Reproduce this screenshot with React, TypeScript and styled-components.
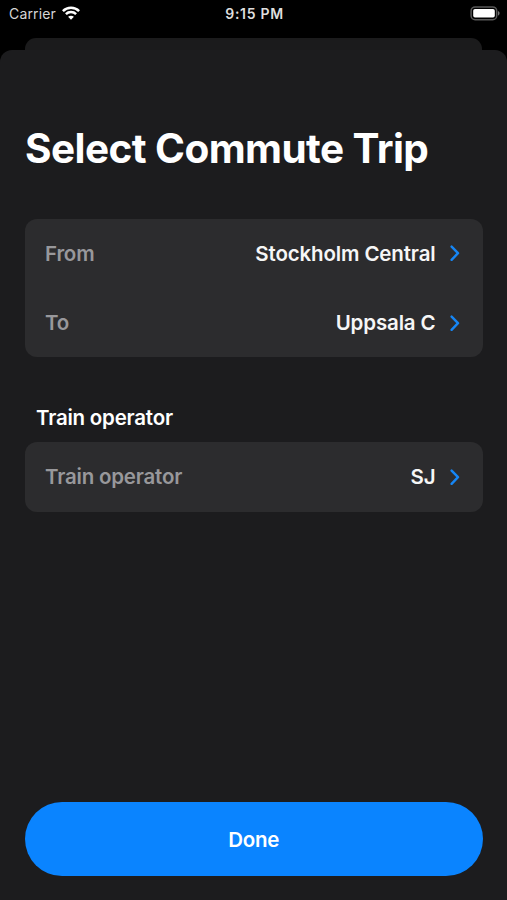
import React from "react";
import styled, { createGlobalStyle } from "styled-components";

const GlobalStyle = createGlobalStyle`
  *, *::before, *::after { box-sizing: border-box; }
  html, body { margin: 0; background: #000; }
  body { font-family: Inter, "Liberation Sans", sans-serif; color: #fff; overflow: hidden; }
  button { font: inherit; color: inherit; border: 0; background: none; padding: 0; }
`;

const Screen = styled.main`
  display: flex;
  flex-direction: column;
  width: 507px;
  height: 900px;
  background: #000;
`;

const StatusBar = styled.header`
  display: grid;
  grid-template-columns: 1fr auto 1fr;
  align-items: center;
  height: 28px;
  flex: none;
  padding: 0 7px 0 9px;
  font-size: 14px;
  line-height: 28px;
`;

const Carrier = styled.span`
  display: flex;
  align-items: center;
  gap: 6px;
  color: #d6d6d6;
  letter-spacing: 0.15px;
`;

const WifiSlot = styled.span`
  display: flex;
  margin-top: -2px;
`;

const Clock = styled.time`
  font-weight: 600;
  font-size: 14px;
  letter-spacing: 0.7px;
  color: #dedede;
`;

const Battery = styled.span`
  display: flex;
  justify-content: flex-end;
  margin-top: -1px;
`;

const PreviousSheet = styled.div`
  flex: none;
  height: 12px;
  margin: 10px 25px 0;
  border-radius: 11px 11px 0 0;
  background: #1b1b1c;
`;

const Sheet = styled.section`
  display: flex;
  flex-direction: column;
  flex: 1;
  padding: 74px 24.5px 24.5px 25px;
  border-radius: 12px 12px 0 0;
  background: #1c1c1e;
`;

const Title = styled.h1`
  margin: 0 0 44.5px;
  font-size: 40.5px;
  font-weight: 700;
  line-height: 50px;
  letter-spacing: -0.57px;
  white-space: nowrap;
`;

const Card = styled.div`
  display: flex;
  flex-direction: column;
  border-radius: 12px;
  background: #2c2c2e;
`;

const Row = styled.button`
  display: flex;
  align-items: center;
  height: 69.4px;
  padding: 0 23px 0 20px;
  font-size: 20.5px;
  font-weight: 560;
`;

const Label = styled.span`
  flex: 1;
  text-align: left;
  color: #98989b;
  letter-spacing: -0.2px;
`;

const Value = styled.span`
  margin-right: 14px;
  color: #f6f6f6;
  letter-spacing: -0.14px;
`;

const SectionTitle = styled.h2`
  margin: 48px 0 11px 11px;
  font-size: 20.5px;
  font-weight: 560;
  line-height: 26px;
  letter-spacing: -0.22px;
`;

const DoneButton = styled.button`
  height: 73.5px;
  margin-top: auto;
  padding-top: 2px;
  border-radius: 37px;
  background: #0a84ff;
  font-size: 20.5px;
  font-weight: 560;
  letter-spacing: -0.3px;
`;

const Chevron = () => (
  <svg width="10" height="16" viewBox="0 0 10 16" fill="none">
    <path d="M1.6 1.6 8 8.200 1.600 14.800" stroke="#1686f5" strokeWidth="2.400" strokeLinecap="round" strokeLinejoin="round" />
  </svg>
);

const WifiIcon = () => (
  <svg width="18" height="14" viewBox="0 0 18 14" fill="none" stroke="#fff" strokeWidth="2.5">
    <path d="M.9 5.1C5.4.6 12.600.6 17.100 5.100" />
    <path d="M3.900 8.200C6.700 5.400 11.300 5.400 14.100 8.200" />
    <path d="M9 13.700 6.100 10.700C7.700 9.300 10.300 9.300 11.900 10.700Z" fill="#fff" stroke="none" />
  </svg>
);

const BatteryIcon = () => (
  <svg width="30" height="15" viewBox="0 0 30 15" fill="none">
    <rect x="1.100" y=".9" width="25.600" height="12.800" rx="4" stroke="#585858" strokeWidth="1.500" />
    <rect x="3.200" y="3" width="21.600" height="8.600" rx="1.800" fill="#fff" />
    <path d="M28 5v4.600C30.100 8.800 30.100 5.800 28 5Z" fill="#747474" />
  </svg>
);

interface Field {
  label: string;
  value: string;
}

const route: Field[] = [
  { label: "From", value: "Stockholm Central" },
  { label: "To", value: "Uppsala C" },
];

const operator: Field[] = [{ label: "Train operator", value: "SJ" }];

const FieldCard = ({ fields }: { fields: Field[] }) => (
  <Card>
    {fields.map((f) => (
      <Row key={f.label} type="button">
        <Label>{f.label}</Label>
        <Value>{f.value}</Value>
        <Chevron />
      </Row>
    ))}
  </Card>
);

export default function App() {
  return (
    <>
      <GlobalStyle />
      <Screen>
        <StatusBar>
          <Carrier>
            Carrier
            <WifiSlot><WifiIcon /></WifiSlot>
          </Carrier>
          <Clock>9:15 PM</Clock>
          <Battery><BatteryIcon /></Battery>
        </StatusBar>
        <PreviousSheet />
        <Sheet>
          <Title>Select Commute Trip</Title>
          <FieldCard fields={route} />
          <SectionTitle>Train operator</SectionTitle>
          <FieldCard fields={operator} />
          <DoneButton type="button">Done</DoneButton>
        </Sheet>
      </Screen>
    </>
  );
}
